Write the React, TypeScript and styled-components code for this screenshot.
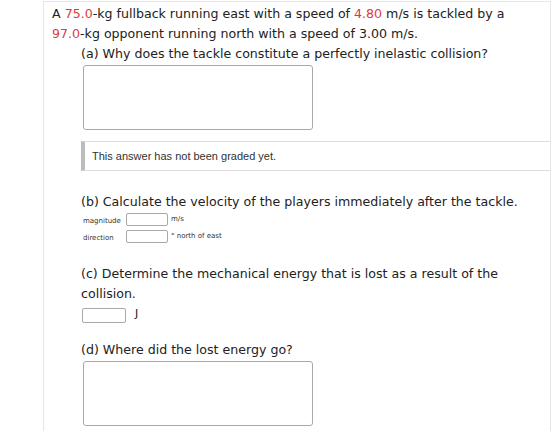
import React from 'react';
import styled, { createGlobalStyle } from 'styled-components';

const GlobalStyle = createGlobalStyle`
	html, body {
		margin: 0;
		padding: 0;
		background: #ffffff;
	}
	body {
		font-family: 'DejaVu Sans', Verdana, sans-serif;
		color: #222222;
	}
`;

const Page = styled.div`
	padding: 1px 0 0 43px;
	width: 508px;
`;

const Panel = styled.div`
	border: 1px solid #e6e6e6;
	border-bottom: none;
	padding: 2px 0 20px 8px;
`;

const Intro = styled.p`
	margin: 0;
	font-size: 12.6px;
	line-height: 19.5px;
`;

const Red = styled.span`
	color: #dd3b3b;
`;

const Part = styled.div<{ top: number }>`
	margin-top: ${(p) => p.top}px;
	padding-left: 29px;
`;

const Prompt = styled.p`
	margin: 0;
	font-size: 12.6px;
	line-height: 19.5px;
`;

const TextArea = styled.div`
	box-sizing: border-box;
	width: 230px;
	height: 65px;
	margin: 1px 0 0 2px;
	border: 1px solid #a9a9a9;
	border-radius: 3px;
`;

const Graded = styled.div`
	box-sizing: border-box;
	margin-top: 11px;
	height: 30px;
	display: flex;
	align-items: center;
	border: 1px solid #dedede;
	border-left: 4px solid #bdbdbd;
	border-right: none;
	padding-left: 7px;
	font-family: 'Liberation Sans', Arial, sans-serif;
	font-size: 11px;
	color: #333333;
`;

const Fields = styled.div`
	display: grid;
	grid-template-columns: 43px auto 1fr;
	align-items: center;
	row-gap: 4px;
	margin-top: 2px;
	margin-left: 2px;
`;

const Label = styled.span`
	font-size: 7px;
	color: #333333;
	padding-top: 3px;
`;

const Unit = styled.span`
	font-size: 7px;
	color: #333333;
	margin-left: 3px;
	padding-bottom: 2px;
`;

const Input = styled.div<{ w: number; h: number }>`
	box-sizing: border-box;
	width: ${(p) => p.w}px;
	height: ${(p) => p.h}px;
	border: 1px solid #a9a9a9;
	border-radius: 2px;
`;

const InlineRow = styled.div`
	display: flex;
	align-items: center;
	margin-top: 4px;
	margin-left: 1px;
`;

const JUnit = styled.span`
	font-size: 11px;
	margin-left: 9px;
	padding-bottom: 3px;
`;

export default function App() {
	return (
		<>
			<GlobalStyle />
			<Page>
				<Panel>
					<Intro>
						A <Red>75.0</Red>-kg fullback running east with a speed of <Red>4.80</Red> m/s is tackled by a
						<br />
						<Red>97.0</Red>-kg opponent running north with a speed of 3.00 m/s.
					</Intro>
					<Part top={1}>
						<Prompt>(a) Why does the tackle constitute a perfectly inelastic collision?</Prompt>
						<TextArea />
						<Graded>This answer has not been graded yet.</Graded>
					</Part>
					<Part top={21}>
						<Prompt>(b) Calculate the velocity of the players immediately after the tackle.</Prompt>
						<Fields>
							<Label>magnitude</Label>
							<Input w={42} h={13} />
							<Unit>m/s</Unit>
							<Label>direction</Label>
							<Input w={42} h={13} />
							<Unit>° north of east</Unit>
						</Fields>
					</Part>
					<Part top={21}>
						<Prompt>(c) Determine the mechanical energy that is lost as a result of the collision.</Prompt>
						<InlineRow>
							<Input w={44} h={15} />
							<JUnit>J</JUnit>
						</InlineRow>
					</Part>
					<Part top={17}>
						<Prompt>(d) Where did the lost energy go?</Prompt>
						<TextArea />
					</Part>
				</Panel>
			</Page>
		</>
	);
}
